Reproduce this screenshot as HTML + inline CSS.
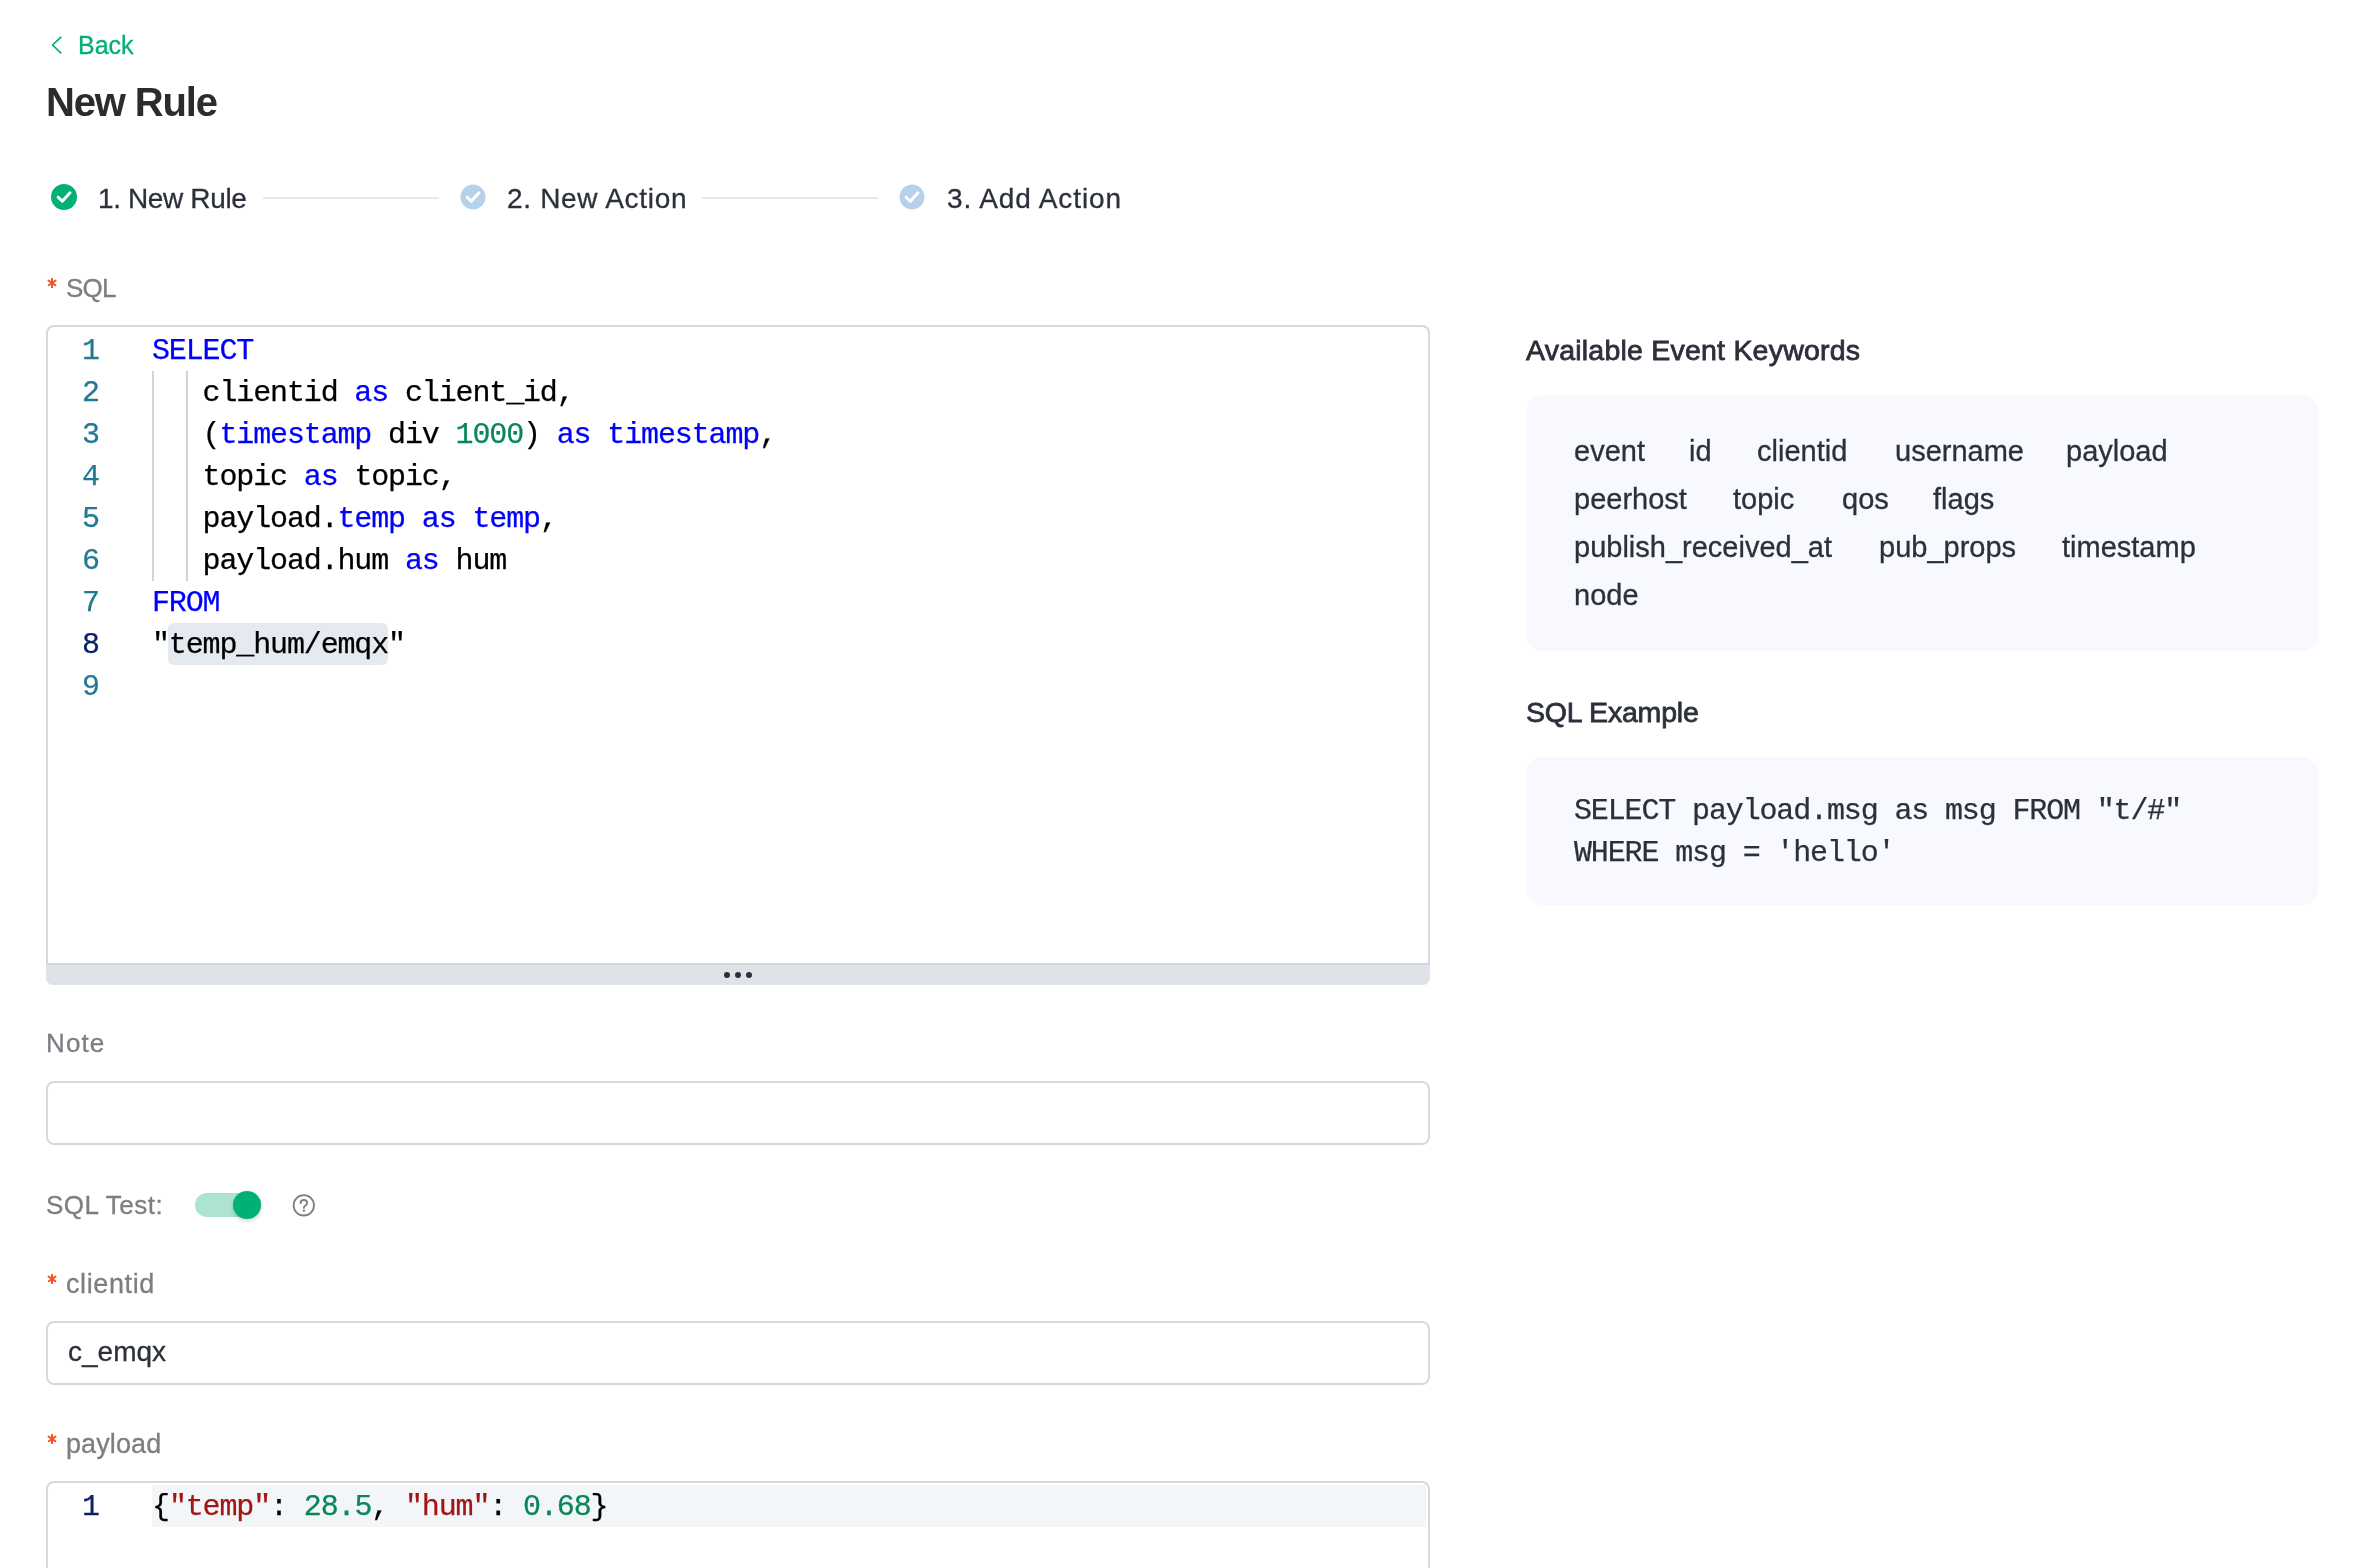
<!DOCTYPE html>
<html><head><meta charset="utf-8">
<style>
html,body{margin:0;padding:0;background:#fff;}
body{width:2356px;height:1568px;position:relative;overflow:hidden;font-family:"Liberation Sans",sans-serif;}
.a{position:absolute;white-space:pre;}
#wrap{position:absolute;left:0;top:0;width:2356px;height:1568px;will-change:transform;}
.s{font-family:"Liberation Sans",sans-serif;-webkit-text-stroke:0.3px currentColor;}
.m{font-family:"Liberation Mono",monospace;-webkit-text-stroke:0.25px currentColor;}
.lbl{color:#7c7e82;}
.req{color:#f0642e;}
.dk{color:#2c303a;}
.box{position:absolute;box-sizing:border-box;}
.ln{position:absolute;left:49px;width:51px;text-align:right;font-family:"Liberation Mono",monospace;font-size:30px;line-height:42px;color:#237893;margin-top:1px;-webkit-text-stroke:0.25px currentColor;}
.cl{position:absolute;left:152px;font-family:"Liberation Mono",monospace;font-size:30px;letter-spacing:-1.14px;line-height:42px;color:#000;white-space:pre;margin-top:1px;-webkit-text-stroke:0.25px currentColor;}
.kw{color:#0000ff;}
.nu{color:#098658;}
.st{color:#a31515;}
</style></head>
<body>
<div id="wrap">

<!-- Back -->
<svg class="a" style="left:48px;top:32px" width="18" height="26" viewBox="0 0 18 26"><path d="M13.3 4.8 L4.6 13 L13.3 21.3" fill="none" stroke="#00b173" stroke-width="1.7"/></svg>
<div class="a s" id="back" style="left:78px;top:32.5px;font-size:25px;line-height:25px;color:#00b173;">Back</div>

<!-- Title -->
<div class="a s" id="title" style="left:46px;top:81.5px;font-size:40px;line-height:40px;font-weight:bold;color:#2c2c2c;letter-spacing:-1.15px;-webkit-text-stroke:0;">New Rule</div>

<!-- Steps -->
<svg class="a" style="left:51px;top:184px" width="26" height="26" viewBox="0 0 26 26"><circle cx="13" cy="13" r="13" fill="#00b173"/><path d="M7.2 13.2 L11.3 17.2 L19 8.8" fill="none" stroke="#fff" stroke-width="3" stroke-linecap="round" stroke-linejoin="round"/></svg>
<div class="a s dk" id="st1" style="left:98px;top:185px;font-size:28px;line-height:28px;letter-spacing:-0.37px;">1. New Rule</div>
<div class="box" style="left:263px;top:197px;width:176px;height:2px;background:#e1e8ef;"></div>
<svg class="a" style="left:460.4px;top:184.4px" width="26" height="26" viewBox="0 0 26 26"><circle cx="13" cy="13" r="12.5" fill="#b6d2ea"/><path d="M7.2 13.2 L11.3 17.2 L19 8.8" fill="none" stroke="#fff" stroke-width="3" stroke-linecap="round" stroke-linejoin="round"/></svg>
<div class="a s dk" id="st2" style="left:507px;top:185px;font-size:28px;line-height:28px;letter-spacing:0.69px;">2. New Action</div>
<div class="box" style="left:702px;top:197px;width:176px;height:2px;background:#e1e8ef;"></div>
<svg class="a" style="left:899.3px;top:184.4px" width="26" height="26" viewBox="0 0 26 26"><circle cx="13" cy="13" r="12.5" fill="#b6d2ea"/><path d="M7.2 13.2 L11.3 17.2 L19 8.8" fill="none" stroke="#fff" stroke-width="3" stroke-linecap="round" stroke-linejoin="round"/></svg>
<div class="a s dk" id="st3" style="left:947px;top:185px;font-size:28px;line-height:28px;letter-spacing:0.88px;">3. Add Action</div>

<!-- SQL label -->
<svg class="a" style="left:47.1px;top:278.2px" width="10" height="10" viewBox="0 0 10 10"><path d="M5 0.9V9.6M1.6 2.6L5 5L8.5 2.6M1.8 7.2L5 5L8.3 7.2" fill="none" stroke="#f0582a" stroke-width="2" stroke-linecap="round" stroke-linejoin="round"/></svg>
<div class="a s lbl" id="sqllbl" style="left:66px;top:275.3px;font-size:26px;line-height:26px;letter-spacing:-0.8px;">SQL</div>

<!-- SQL editor -->
<div class="box" style="left:46px;top:325px;width:1384px;height:660px;border:2px solid #d5d8e0;border-bottom:none;border-radius:8px 8px 8px 8px;overflow:hidden;background:#fff;">
</div>
<div class="box" style="left:46px;top:963px;width:1384px;height:22px;background:#dfe3e8;border-top:2px solid #d3d6de;border-radius:0 0 8px 8px;"></div>
<div class="box" style="left:724px;top:972px;width:6px;height:6px;border-radius:3px;background:#2e3039;"></div>
<div class="box" style="left:735px;top:972px;width:6px;height:6px;border-radius:3px;background:#2e3039;"></div>
<div class="box" style="left:746px;top:972px;width:6px;height:6px;border-radius:3px;background:#2e3039;"></div>

<!-- indent guides -->
<div class="box" style="left:152px;top:371px;width:2px;height:210px;background:#d3d3d3;"></div>
<div class="box" style="left:186px;top:371px;width:2px;height:210px;background:#d3d3d3;"></div>
<!-- word highlight -->
<div class="box" style="left:168px;top:623px;width:220px;height:42px;background:#e5e9f0;border-radius:6px;"></div>

<div class="ln" style="top:329px">1</div>
<div class="ln" style="top:371px">2</div>
<div class="ln" style="top:413px">3</div>
<div class="ln" style="top:455px">4</div>
<div class="ln" style="top:497px">5</div>
<div class="ln" style="top:539px">6</div>
<div class="ln" style="top:581px">7</div>
<div class="ln" style="top:623px;color:#0b216f">8</div>
<div class="ln" style="top:665px">9</div>

<div class="cl" style="top:329px"><span class="kw">SELECT</span></div>
<div class="cl" style="top:371px">   clientid <span class="kw">as</span> client_id,</div>
<div class="cl" style="top:413px">   (<span class="kw">timestamp</span> div <span class="nu">1000</span>) <span class="kw">as</span> <span class="kw">timestamp</span>,</div>
<div class="cl" style="top:455px">   topic <span class="kw">as</span> topic,</div>
<div class="cl" style="top:497px">   payload.<span class="kw">temp</span> <span class="kw">as</span> <span class="kw">temp</span>,</div>
<div class="cl" style="top:539px">   payload.hum <span class="kw">as</span> hum</div>
<div class="cl" style="top:581px"><span class="kw">FROM</span></div>
<div class="cl" style="top:623px">"temp_hum/emqx"</div>

<!-- Note -->
<div class="a s lbl" id="note" style="left:46px;top:1030px;font-size:26px;line-height:26px;letter-spacing:1.1px;">Note</div>
<div class="box" style="left:46px;top:1081px;width:1384px;height:64px;border:2px solid #d5d8e0;border-radius:8px;"></div>

<!-- SQL Test -->
<div class="a s lbl" id="sqltest" style="left:46px;top:1192px;font-size:26px;line-height:26px;letter-spacing:0.5px;">SQL Test:</div>
<div class="box" style="left:195px;top:1193px;width:66px;height:24px;border-radius:12px;background:#ace4d0;"></div>
<div class="box" style="left:233px;top:1191px;width:28px;height:28px;border-radius:14px;background:#00b173;box-shadow:0 2px 4px rgba(0,0,0,0.18);"></div>
<svg class="a" style="left:292px;top:1194px" width="24" height="24" viewBox="0 0 24 24"><circle cx="11.8" cy="11.3" r="10.2" fill="none" stroke="#7c7e82" stroke-width="1.8"/><path d="M8.6 9.2 C8.6 7.2 10 6 11.9 6 C13.8 6 15.2 7.2 15.2 8.9 C15.2 10.5 14 11.1 13 11.8 C12.2 12.3 11.9 12.8 11.9 13.9" fill="none" stroke="#7c7e82" stroke-width="1.8" stroke-linecap="round"/><circle cx="11.9" cy="16.6" r="1.2" fill="#7c7e82"/></svg>

<!-- clientid -->
<svg class="a" style="left:47.1px;top:1274.1px" width="10" height="10" viewBox="0 0 10 10"><path d="M5 0.9V9.6M1.6 2.6L5 5L8.5 2.6M1.8 7.2L5 5L8.3 7.2" fill="none" stroke="#f0582a" stroke-width="2" stroke-linecap="round" stroke-linejoin="round"/></svg>
<div class="a s lbl" id="cidlbl" style="left:66px;top:1271px;font-size:27px;line-height:27px;letter-spacing:0.6px;">clientid</div>
<div class="box" style="left:46px;top:1321px;width:1384px;height:64px;border:2px solid #d5d8e0;border-radius:8px;"></div>
<div class="a s dk" id="cemqx" style="left:68px;top:1338px;font-size:28px;line-height:28px;">c_emqx</div>

<!-- payload -->
<svg class="a" style="left:47.1px;top:1434px" width="10" height="10" viewBox="0 0 10 10"><path d="M5 0.9V9.6M1.6 2.6L5 5L8.5 2.6M1.8 7.2L5 5L8.3 7.2" fill="none" stroke="#f0582a" stroke-width="2" stroke-linecap="round" stroke-linejoin="round"/></svg>
<div class="a s lbl" id="pllbl" style="left:66px;top:1431px;font-size:27px;line-height:27px;letter-spacing:0.1px;">payload</div>
<div class="box" style="left:46px;top:1481px;width:1384px;height:200px;border:2px solid #d5d8e0;border-radius:8px;"></div>
<div class="box" style="left:152px;top:1485px;width:1274px;height:42px;background:#f3f6f9;"></div>
<div class="ln" style="top:1485px;color:#0b216f">1</div>
<div class="cl" style="top:1485px">{<span class="st">"temp"</span>: <span class="nu">28.5</span>, <span class="st">"hum"</span>: <span class="nu">0.68</span>}</div>

<!-- Right panel -->
<div class="a s dk" id="avail" style="left:1526px;top:336px;font-size:28.5px;line-height:28px;-webkit-text-stroke:0.8px #2c303a;letter-spacing:0.22px;">Available Event Keywords</div>
<div class="box" style="left:1526px;top:395px;width:792px;height:256px;background:#f7f9fe;border-radius:16px;"></div>
<div class="a s dk" style="left:1574px;top:436.5px;font-size:29px;line-height:29px;">event</div>
<div class="a s dk" style="left:1689px;top:436.5px;font-size:29px;line-height:29px;">id</div>
<div class="a s dk" style="left:1757px;top:436.5px;font-size:29px;line-height:29px;">clientid</div>
<div class="a s dk" style="left:1895px;top:436.5px;font-size:29px;line-height:29px;">username</div>
<div class="a s dk" style="left:2066px;top:436.5px;font-size:29px;line-height:29px;">payload</div>
<div class="a s dk" style="left:1574px;top:484.5px;font-size:29px;line-height:29px;">peerhost</div>
<div class="a s dk" style="left:1733px;top:484.5px;font-size:29px;line-height:29px;">topic</div>
<div class="a s dk" style="left:1842px;top:484.5px;font-size:29px;line-height:29px;">qos</div>
<div class="a s dk" style="left:1933px;top:484.5px;font-size:29px;line-height:29px;">flags</div>
<div class="a s dk" style="left:1574px;top:532.5px;font-size:29px;line-height:29px;">publish_received_at</div>
<div class="a s dk" style="left:1879px;top:532.5px;font-size:29px;line-height:29px;">pub_props</div>
<div class="a s dk" style="left:2062px;top:532.5px;font-size:29px;line-height:29px;">timestamp</div>
<div class="a s dk" style="left:1574px;top:580.5px;font-size:29px;line-height:29px;">node</div>

<div class="a s dk" id="sqlex" style="left:1526px;top:698px;font-size:28.5px;line-height:28px;-webkit-text-stroke:0.8px #2c303a;letter-spacing:-0.2px;">SQL Example</div>
<div class="box" style="left:1526px;top:757px;width:792px;height:148px;background:#f7f9fe;border-radius:16px;"></div>
<div class="a m dk" id="sqlcode" style="left:1574px;top:790px;font-size:30px;letter-spacing:-1.14px;line-height:42px;">SELECT payload.msg as msg FROM "t/#"
WHERE msg = 'hello'</div>

</div>
</body></html>
